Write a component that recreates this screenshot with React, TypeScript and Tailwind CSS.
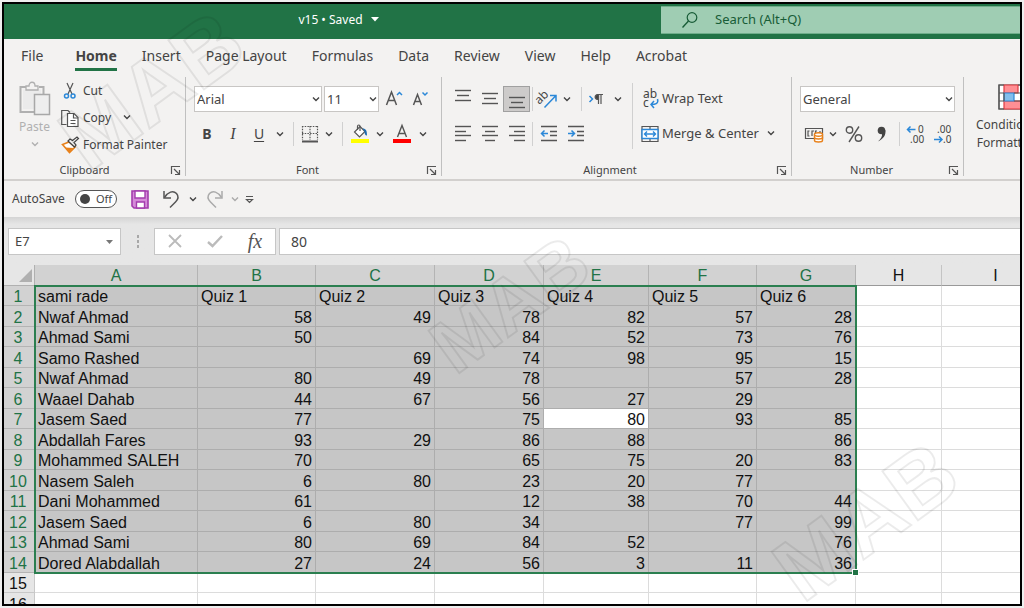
import React, { useState } from 'react'
import clsx from 'clsx'

const columns = ['A', 'B', 'C', 'D', 'E', 'F', 'G', 'H', 'I']

const rows: string[][] = [
  ['sami rade', 'Quiz 1', 'Quiz 2', 'Quiz 3', 'Quiz 4', 'Quiz 5', 'Quiz 6'],
  ['Nwaf Ahmad', '58', '49', '78', '82', '57', '28'],
  ['Ahmad Sami', '50', '', '84', '52', '73', '76'],
  ['Samo Rashed', '', '69', '74', '98', '95', '15'],
  ['Nwaf Ahmad', '80', '49', '78', '', '57', '28'],
  ['Waael Dahab', '44', '67', '56', '27', '29', ''],
  ['Jasem Saed', '77', '', '75', '80', '93', '85'],
  ['Abdallah Fares', '93', '29', '86', '88', '', '86'],
  ['Mohammed SALEH', '70', '', '65', '75', '20', '83'],
  ['Nasem Saleh', '6', '80', '23', '20', '77', ''],
  ['Dani Mohammed', '61', '', '12', '38', '70', '44'],
  ['Jasem Saed', '6', '80', '34', '', '77', '99'],
  ['Ahmad Sami', '80', '69', '84', '52', '', '76'],
  ['Dored Alabdallah', '27', '24', '56', '3', '11', '36'],
  [],
  [],
]

const tabs = ['Home', 'Insert', 'Page Layout', 'Formulas', 'Data', 'Review', 'View', 'Help', 'Acrobat']

interface IconProps {
  w?: number
  h?: number
  className?: string
  children: React.ReactNode
}

function Icon({ w = 18, h = 18, className, children }: IconProps) {
  return (
    <svg
      width={w}
      height={h}
      viewBox={`0 0 ${w} ${h}`}
      fill="none"
      stroke="#555"
      strokeWidth="1.2"
      className={clsx('shrink-0 overflow-visible', className)}
      aria-hidden="true"
    >
      {children}
    </svg>
  )
}

function Chevron({ className }: { className?: string }) {
  return (
    <Icon w={8} h={6} className={className}>
      <path d="M1 1.5l3 3 3-3" strokeWidth="1.4" stroke="currentColor" />
    </Icon>
  )
}

function DropButton({ label, className = 'w-4' }: { label: string; className?: string }) {
  return (
    <button aria-label={label} className={clsx('flex h-6 items-center justify-center', className)}>
      <Chevron />
    </button>
  )
}

interface ToolProps {
  label: string
  className?: string
  children: React.ReactNode
}

function Tool({ label, className = 'w-[27px]', children }: ToolProps) {
  return (
    <button aria-label={label} className={clsx('flex h-[26px] items-center justify-center', className)}>
      {children}
    </button>
  )
}

function Divider({ className }: { className?: string }) {
  return <div className={clsx('h-6 w-px bg-[#d0d0d0]', className)} />
}

interface PickerProps {
  label: string
  value: string
  className?: string
}

function Picker({ label, value, className }: PickerProps) {
  return (
    <div className={clsx('relative h-[26px]', className)}>
      <select
        aria-label={label}
        className="h-full w-full appearance-none border border-[#c8c6c4] bg-white pl-0.5 text-[13px] leading-6 text-[#444]"
      >
        <option>{value}</option>
      </select>
      <Chevron className="pointer-events-none absolute top-2.5 right-0.5" />
    </div>
  )
}

interface GroupProps {
  title: string
  className?: string
  children: React.ReactNode
}

function Group({ title, className, children }: GroupProps) {
  return (
    <section className={clsx('flex shrink-0 flex-col border-r border-[#c0c0c0]', className)}>
      <div className="flex-1">{children}</div>
      <div className="flex h-3 items-center">
        <h2 className="flex-1 text-center text-[11px] leading-3">{title}</h2>
        <button aria-label={`${title} settings`} className="flex w-5 justify-center">
          <Icon w={11} h={11}>
            <path d="M1.5 9V1.5H10M4 4l5 5M9.5 5v4.5H5" />
          </Icon>
        </button>
      </div>
    </section>
  )
}

function LinesIcon({ lines }: { lines: number[][] }) {
  return (
    <Icon>
      {lines.map(([x1, x2, y]) => (
        <path key={y} d={`M${x1} ${y}.5H${x2}`} strokeWidth="1.4" />
      ))}
    </Icon>
  )
}

function ClipboardGroup() {
  return (
    <Group title="Clipboard" className="w-[182px]">
      <div className="flex">
        <button className="flex w-[57px] flex-col items-center pl-1 text-[#b0b0b0]">
          <Icon w={32} h={36} className="mt-1">
            <path d="M7 6H1.5v25H16M20 6h4.500v7" stroke="#b0b0b0" strokeWidth="2" />
            <path d="M4 8.500h18v4.500h-7v15H4z" fill="#ebebeb" stroke="none" />
            <path d="M7 9V5h3c0-5 6-5 6 0h3v4z" fill="#f3f2f1" stroke="#b0b0b0" strokeWidth="1.3" />
            <path d="M15.500 13.500h15v20h-15z" fill="#eee" stroke="#a8a8a8" strokeWidth="1.500" />
          </Icon>
          <span className="text-xs leading-5">Paste</span>
          <Chevron className="mt-1" />
        </button>
        <div className="flex flex-col gap-px pt-px text-xs">
          <button className="flex h-[26px] items-center gap-1">
            <Icon>
              <path d="M6 1l5 11M12 1L7 12" />
              <circle cx="5.5" cy="14" r="2" stroke="#2b88d8" strokeWidth="1.5" />
              <circle cx="12" cy="14" r="2" stroke="#2b88d8" strokeWidth="1.5" />
            </Icon>
            Cut
          </button>
          <div className="flex">
            <button className="flex h-[26px] items-center gap-1">
              <Icon>
                <path d="M5.500 15.500H.7V1.500H7l2 2" />
                <path d="M6.500 4.500H13l4 4v9H6.500z" fill="#fff" />
                <path d="M12.500 4.500v4.500H17M9.500 11.500h5M9.500 14.500h5" />
              </Icon>
              Copy
            </button>
            <DropButton label="Copy options" className="ml-2 w-4" />
          </div>
          <button className="flex h-[26px] items-center gap-1">
            <Icon>
              <path d="M1.500 8.500l7 8 5.500-5.500-6-5z" stroke="#e8811a" strokeWidth="1.6" fill="#fff" />
              <path d="M4 11.500l4.500 4.500 4-4z" fill="#e8811a" stroke="none" />
              <path d="M7 5l6.500 6 1.500-2-2-2.500L17.500 2.500 16 1l-4.500 3.500L9 3z" fill="#f3f2f1" stroke="#444" />
            </Icon>
            Format Painter
          </button>
        </div>
      </div>
    </Group>
  )
}

function FontGroup() {
  return (
    <Group title="Font" className="w-64 pl-2">
      <div className="flex h-11 items-center">
        <Picker label="Font" value="Arial" className="w-32" />
        <Picker label="Font size" value="11" className="ml-0.5 w-[55px]" />
        <Tool label="Increase font size" className="ml-0.5 w-[26px]">
          <Icon>
            <path d="M1.500 15L6.500 2 11.500 15M3.500 10.500h6.500" strokeWidth="1.500" />
            <path d="M12 5l2.500-2.500L17 5" stroke="#2b88d8" strokeWidth="1.500" />
          </Icon>
        </Tool>
        <Tool label="Decrease font size" className="w-[26px]">
          <Icon>
            <path d="M2.500 15l4-10.500 4 10.500M4 11.500h5.500" strokeWidth="1.500" />
            <path d="M11.500 2.500L14 5l2.500-2.500" stroke="#2b88d8" strokeWidth="1.500" />
          </Icon>
        </Tool>
      </div>
      <div className="flex h-[26px] items-center">
        <Tool label="Bold" className="w-[26px] text-sm font-bold">B</Tool>
        <Tool label="Italic" className="w-[26px] font-['Liberation_Serif'] text-base italic">I</Tool>
        <Tool label="Underline" className="w-[26px] text-sm underline underline-offset-2">U</Tool>
        <DropButton label="Underline options" />
        <Divider className="mx-[5px]" />
        <Tool label="Borders" className="w-[22px]">
          <Icon>
            <path d="M1.500 1v14M9 1v14M16.500 1v14M1 1.500h16M1 8.500h16" strokeDasharray="1.500 1.200" />
            <path d="M1 16.500h16" strokeWidth="2" />
          </Icon>
        </Tool>
        <DropButton label="Border options" />
        <Divider className="mx-[5px]" />
        <Tool label="Fill color" className="w-6">
          <Icon h={20}>
            <path d="M0 15h18v4H0z" fill="#ff0" stroke="none" />
            <path d="M9 2.500l5 5-5.500 5.500L3.500 8z" fill="#fff" />
            <path d="M9 7V2.500C9 .5 6.500.5 6.500 2.500V6" />
            <path d="M11.500 4.500c3.500 0 4.500 2 4.500 7-2 0-2.500-2-2.500-4z" fill="#1e6cb0" stroke="none" />
          </Icon>
        </Tool>
        <DropButton label="Fill color options" />
        <Tool label="Font color">
          <Icon h={20}>
            <path d="M4.500 13L9 1.500 13.500 13M6 9.500h6" strokeWidth="1.400" />
            <path d="M0 15h18v4H0z" fill="#f00" stroke="none" />
          </Icon>
        </Tool>
        <DropButton label="Font color options" />
      </div>
    </Group>
  )
}

function AlignmentGroup() {
  return (
    <Group title="Alignment" className="w-[350px] pl-[7px]">
      <div className="flex">
        <div className="w-[183px]">
          <div className="flex h-11 items-center">
            <Tool label="Top align">
              <LinesIcon lines={[[1, 17, 0], [3, 15, 5], [1, 17, 10]]} />
            </Tool>
            <Tool label="Middle align">
              <LinesIcon lines={[[1, 17, 3], [3, 15, 8], [1, 17, 13]]} />
            </Tool>
            <Tool label="Bottom align" className="w-[27px] border border-[#a0a0a0] bg-[#cdcbca]">
              <LinesIcon lines={[[1, 17, 7], [3, 15, 12], [1, 17, 17]]} />
            </Tool>
            <Divider className="mx-0.5" />
            <Tool label="Orientation" className="w-6">
              <Icon w={20}>
                <text x="-2" y="11" transform="rotate(-45 5 8)" fontSize="12" fill="#444" stroke="none">ab</text>
                <path d="M7.500 17.500L18.500 6M13 5.500h6v6" stroke="#2b88d8" strokeWidth="1.500" />
              </Icon>
            </Tool>
            <DropButton label="Orientation options" />
            <Divider className="ml-1.5" />
            <Tool label="Text direction" className="w-7">
              <Icon w={16}>
                <path d="M1.500 6l3 3-3 3" stroke="#2b88d8" strokeWidth="1.500" />
                <path d="M10.500 14V4.500M13 14V4.500M8.500 4.500H15" />
                <path d="M10.500 4.500v5C6 9.500 6 4.500 10.500 4.500z" fill="#444" />
              </Icon>
            </Tool>
            <DropButton label="Text direction options" />
          </div>
          <div className="flex h-[26px] items-center">
            <Tool label="Align left">
              <LinesIcon lines={[[1, 17, 1], [1, 12, 6], [1, 17, 10], [1, 12, 15]]} />
            </Tool>
            <Tool label="Center">
              <LinesIcon lines={[[1, 17, 1], [4, 14, 6], [1, 17, 10], [4, 14, 15]]} />
            </Tool>
            <Tool label="Align right">
              <LinesIcon lines={[[1, 17, 1], [6, 17, 6], [1, 17, 10], [6, 17, 15]]} />
            </Tool>
            <Divider className="mx-0.5" />
            <Tool label="Decrease indent">
              <Icon>
                <path d="M1 1.500h16M10 6.500h7M10 10.500h7M1 15.500h16" strokeWidth="1.400" />
                <path d="M8 8.500H1.500M4.500 5.500l-3 3 3 3" stroke="#2b88d8" strokeWidth="1.500" />
              </Icon>
            </Tool>
            <Tool label="Increase indent">
              <Icon>
                <path d="M1 1.500h16M10 6.500h7M10 10.500h7M1 15.500h16" strokeWidth="1.400" />
                <path d="M1 8.500h6.500M4.500 5.500l3 3-3 3" stroke="#2b88d8" strokeWidth="1.500" />
              </Icon>
            </Tool>
          </div>
        </div>
        <div className="mt-1.5 h-[66px] w-px bg-[#d0d0d0]" />
        <div className="pl-2 text-[13px]">
          <button className="flex h-11 items-center gap-[3px]">
            <Icon h={20}>
              <text x="2" y="9" fontSize="12" fill="#444" stroke="none">ab</text>
              <text x="2" y="18" fontSize="12" fill="#444" stroke="none">c</text>
              <path d="M16.500 10c1.500 5-3 5.500-6 5.500M13 12l-3 3.500 3 3.500" stroke="#2b88d8" strokeWidth="1.500" />
            </Icon>
            Wrap Text
          </button>
          <div className="flex">
            <button className="flex h-[26px] items-center gap-[3px]">
              <Icon>
                <path d="M1 1.500h16v15H1zM9 1.500v15" stroke="#555" />
                <path d="M1 4.500h16v9H1z" fill="#fff" stroke="#2b88d8" strokeWidth="1.400" />
                <path d="M3.500 9h11M6 6.500L3.500 9 6 11.500M12 6.500L14.500 9 12 11.500" stroke="#2b88d8" strokeWidth="1.400" />
              </Icon>
              Merge &amp; Center
            </button>
            <DropButton label="Merge options" className="ml-1 w-4" />
          </div>
        </div>
      </div>
    </Group>
  )
}

function NumberGroup() {
  return (
    <Group title="Number" className="w-[172px] pl-2">
      <div className="flex h-11 items-center">
        <Picker label="Number format" value="General" className="w-[155px]" />
      </div>
      <div className="flex h-[26px] items-center">
        <Tool label="Accounting format">
          <Icon w={20}>
            <path d="M1.500 3.500h17v10h-17z" />
            <path d="M5.500 6H4v5h1.500M10 6H8v5M13 6h-1.500v3M16 6v2" />
            <path d="M10.500 9.500v6c0 2 8 2 8 0v-6" fill="#fff" stroke="#e8811a" strokeWidth="1.400" />
            <path d="M10.500 12.500c0 2 8 2 8 0" stroke="#e8811a" strokeWidth="1.400" />
            <ellipse cx="14.500" cy="9.500" rx="4" ry="1.700" fill="#fff" stroke="#e8811a" strokeWidth="1.400" />
          </Icon>
        </Tool>
        <DropButton label="Accounting options" className="w-3" />
        <Tool label="Percent style" className="w-[30px]">
          <Icon>
            <circle cx="4.500" cy="5" r="3.200" strokeWidth="1.400" />
            <circle cx="13.500" cy="13" r="3.200" strokeWidth="1.400" />
            <path d="M14 1.500L4 17" strokeWidth="1.400" />
          </Icon>
        </Tool>
        <Tool label="Comma style" className="w-6">
          <Icon w={12}>
            <circle cx="6.500" cy="5.500" r="3.800" fill="#444" stroke="none" />
            <path d="M10.300 5c1 5-2 9-7.300 11.500 3-3 4.500-5 4-8z" fill="#444" stroke="none" />
          </Icon>
        </Tool>
        <Divider className="ml-1.5" />
        <Tool label="Increase decimal" className="ml-0.5 w-[27px]">
          <Icon w={20} h={20}>
            <path d="M9.500 5.500h-8M4.500 2.500l-3 3 3 3" stroke="#2b88d8" strokeWidth="1.500" />
            <text x="12" y="9" fontSize="10" fill="#444" stroke="none">0</text>
            <text x="4" y="19" fontSize="10" fill="#444" stroke="none">.00</text>
          </Icon>
        </Tool>
        <Tool label="Decrease decimal">
          <Icon w={20} h={20}>
            <text x="4" y="9" fontSize="10" fill="#444" stroke="none">.00</text>
            <path d="M1 15.500h8M6 12.500l3 3-3 3" stroke="#2b88d8" strokeWidth="1.500" />
            <text x="10" y="19" fontSize="10" fill="#444" stroke="none">.0</text>
          </Icon>
        </Tool>
      </div>
    </Group>
  )
}

function StylesGroup() {
  return (
    <section className="shrink-0 pt-[7px] pl-3">
      <button className="flex flex-col items-center text-xs leading-[18px]">
        <Icon w={28} h={26} className="mb-1.5 ml-2">
          <path d="M1 1h26v24H1z" fill="#fff" />
          <path d="M6 1h14v8H6zM6 17h19v8H6z" fill="#ff8f94" stroke="#e03b41" />
          <path d="M6 9h10v8H6z" fill="#83beec" stroke="#2b88d8" />
          <path d="M6 1H1v24h5M1 9h5M1 17h5M20 1h7v24M16 9h11M16 17h11M6 9v8" />
        </Icon>
        <span>Conditional</span>
        <span>Formatting</span>
      </button>
    </section>
  )
}

function QuickAccess() {
  const [autoSave, setAutoSave] = useState(false)

  return (
    <div className="flex h-9 shrink-0 items-center pl-2">
      <label className="flex items-center gap-2.5 text-xs">
        AutoSave
        <input
          type="checkbox"
          checked={autoSave}
          onChange={e => setAutoSave(e.target.checked)}
          className="sr-only"
        />
        <span className="flex h-[18px] w-[42px] items-center gap-1.5 rounded-full border border-[#555] bg-white pl-1 text-[11px]">
          <span className="h-2.5 w-2.5 shrink-0 rounded-full bg-[#444]" />
          {autoSave ? 'On' : 'Off'}
        </span>
      </label>
      <Tool label="Save" className="ml-2.5 w-[26px]">
        <Icon h={19}>
          <path d="M1 1h16v17H3l-2-2z" fill="#d58bd9" stroke="#a33cad" strokeWidth="1.600" />
          <path d="M4 1h10v7H4z" fill="#fff" stroke="#a33cad" strokeWidth="1.400" />
          <path d="M5.500 18v-6h8v6z" fill="#fff" stroke="#a33cad" strokeWidth="1.400" />
        </Icon>
      </Tool>
      <Tool label="Undo" className="ml-1 w-7">
        <Icon h={20}>
          <path d="M2 2v7h7" strokeWidth="1.500" />
          <path d="M2.500 8.500C6 3 11 1 14.500 4.500c3 3.500 1 6.500-1 8.500L8 18.500" strokeWidth="1.500" />
        </Icon>
      </Tool>
      <DropButton label="Undo history" />
      <Tool label="Redo" className="w-7">
        <Icon h={20}>
          <path d="M16 2v7H9" strokeWidth="1.500" stroke="#aaa" />
          <path d="M15.500 8.500C12 3 7 1 3.500 4.500c-3 3.500-1 6.500 1 8.500L10 18.500" strokeWidth="1.500" stroke="#aaa" />
        </Icon>
      </Tool>
      <DropButton label="Redo history" className="w-3 text-[#aaa]" />
      <Tool label="Customize toolbar" className="ml-1">
        <Icon w={9} h={9}>
          <path d="M1 1.500h7M1.500 4.500l3 3 3-3z" />
        </Icon>
      </Tool>
    </div>
  )
}

function FormulaBar() {
  return (
    <div className="flex h-12 shrink-0 items-center bg-linear-to-b from-[#d4d4d4] via-[#e6e6e6] via-15% to-[#e6e6e6] pl-1">
      <div className="relative h-[27px] w-[113px]">
        <input
          aria-label="Name box"
          defaultValue="E7"
          className="h-full w-full border border-[#c6c6c6] bg-white pl-1.5 text-[13px]"
        />
        <Icon w={7} h={4} className="absolute top-3 right-2">
          <path d="M0 0h7L3.500 4z" fill="#777" stroke="none" />
        </Icon>
      </div>
      <div className="flex w-[33px] flex-col items-center gap-0.5">
        <span className="h-[3px] w-0.5 bg-[#a8a8a8]" />
        <span className="h-[3px] w-0.5 bg-[#a8a8a8]" />
        <span className="h-[3px] w-0.5 bg-[#a8a8a8]" />
      </div>
      <div className="flex h-[27px] w-[122px] items-center justify-around border border-[#c6c6c6] bg-white">
        <Tool label="Cancel">
          <Icon w={14} h={12}>
            <path d="M1 0l12 12M13 0L1 12" stroke="#bbb" strokeWidth="1.800" />
          </Icon>
        </Tool>
        <Tool label="Enter">
          <Icon w={16} h={14}>
            <path d="M1 8l4.500 4L15 2" stroke="#bbb" strokeWidth="2.400" />
          </Icon>
        </Tool>
        <Tool label="Insert function" className="w-[27px] font-['Liberation_Serif'] text-xl italic text-[#555]">
          fx
        </Tool>
      </div>
      <input
        aria-label="Formula"
        defaultValue="80"
        className="ml-[3px] h-[27px] min-w-0 flex-1 border border-r-0 border-[#c6c6c6] bg-white pl-[11px] text-sm"
      />
    </div>
  )
}

function Sheet() {
  return (
    <div className="min-h-0 flex-1 overflow-hidden bg-white font-['Liberation_Sans',sans-serif] text-base leading-[21px] text-[#111]">
      <div className="relative">
        <table className="w-max table-fixed border-separate border-spacing-0">
          <colgroup>
            <col className="w-[31px]" />
            <col className="w-[163px]" />
            <col className="w-[118px]" />
            <col className="w-[119px]" />
            <col className="w-[109px]" />
            <col className="w-[105px]" />
            <col className="w-[108px]" />
            <col className="w-[99px]" />
            <col className="w-[86px]" />
            <col className="w-[108px]" />
          </colgroup>
          <thead>
            <tr className="h-[21px]">
              <th className="border-r border-b border-[#b0b0b0] bg-[#e6e6e6] p-0 pr-0.5">
                <Icon w={13} h={13} className="ml-auto">
                  <path d="M13 0v13H0z" fill="#b0b0b0" stroke="none" />
                </Icon>
              </th>
              {columns.map((name, i) => (
                <th
                  key={name}
                  className={clsx(
                    'border-r border-b border-b-[#999] p-0 font-normal',
                    i < 7 ? 'border-r-[#b4b4b4] bg-[#d2d2d2] text-[#217346]' : 'border-r-[#c4c4c4] bg-[#e6e6e6]'
                  )}
                >
                  <div className="h-5">{name}</div>
                </th>
              ))}
            </tr>
          </thead>
          <tbody>
            {rows.map((cells, r) => (
              <tr key={r} className="h-5 even:h-[21px]">
                <th
                  className={clsx(
                    'border-r border-b p-0 pr-0.5 font-normal',
                    r < 14 ? 'border-[#b4b4b4] bg-[#d2d2d2] text-[#217346]' : 'border-[#c8c8c8] bg-[#e6e6e6]'
                  )}
                >
                  <div className="h-[19px]">{r + 1}</div>
                </th>
                {columns.map((name, c) => {
                  const selected = r < 14 && c < 7
                  const active = r === 6 && c === 4
                  return (
                    <td
                      key={name}
                      className={clsx(
                        'border-r border-b px-[3px] py-0 whitespace-nowrap',
                        selected ? 'border-[#adadad]' : 'border-[#dcdcdc]',
                        selected && (active ? 'bg-white' : 'bg-[#c6c6c6]'),
                        r > 0 && c > 0 && 'text-right'
                      )}
                    >
                      <div className="h-[19px]">{cells[c]}</div>
                    </td>
                  )
                })}
              </tr>
            ))}
          </tbody>
        </table>
        {/* Selection A1:G14 */}
        <div className="pointer-events-none absolute top-5 left-[30px] h-[289px] w-[823px] border-2 border-[#2b7f50]">
          <span className="absolute -right-[3px] -bottom-[3px] h-[5px] w-[5px] bg-[#217346] outline outline-white" />
        </div>
      </div>
    </div>
  )
}

function Watermark({ className }: { className: string }) {
  return (
    <span
      aria-hidden="true"
      className={clsx(
        "pointer-events-none absolute -translate-x-1/2 -translate-y-1/2 -rotate-36 font-['Liberation_Sans',sans-serif] leading-none font-bold text-transparent select-none [-webkit-text-stroke:2px_rgba(0,0,0,0.08)]",
        className
      )}
    >
      MAB
    </span>
  )
}

export default function App() {
  return (
    <div className="h-screen bg-[#eee] p-0.5 font-['Noto_Sans',sans-serif] text-[#444]">
      <main className="relative flex h-full flex-col overflow-hidden border-2 border-black bg-[#f3f2f1]">
        <header className="flex h-[35px] shrink-0 items-center bg-[#217346] text-white">
          <div className="flex w-[657px] items-center justify-center gap-2 pb-1 pl-3 text-xs">
            <h1>v15 • Saved</h1>
            <Icon w={8} h={5}>
              <path d="M0 0h8L4 4.500z" fill="#fff" stroke="none" />
            </Icon>
          </div>
          <div className="mb-1 flex h-7 flex-1 items-center gap-4 border-y border-[#6fae8b] bg-[#9fcdb3] pl-5">
            <Icon>
              <circle cx="11" cy="6.500" r="4.800" stroke="#185c37" />
              <path d="M7.500 10L1.500 16.500" stroke="#185c37" strokeWidth="1.400" />
            </Icon>
            <input
              type="search"
              aria-label="Search"
              placeholder="Search (Alt+Q)"
              className="min-w-0 flex-1 bg-transparent text-[13px] text-[#185c37] placeholder:text-[#185c37]"
            />
          </div>
        </header>

        <nav className="flex h-[38px] shrink-0 items-start pl-[17px] text-sm leading-5">
          <a href="#file" className="mt-[7px] mr-8">File</a>
          <div className="flex gap-[25px]">
            {tabs.map(tab => (
              <a
                key={tab}
                href={`#${tab}`}
                className={clsx('mt-[7px] whitespace-nowrap', tab === 'Home' && 'border-b-3 border-[#217346] pb-0.5 font-bold')}
              >
                {tab}
              </a>
            ))}
          </div>
        </nav>

        <div className="flex h-[104px] shrink-0 border-b-2 border-[#d2d0ce] pb-[3px]">
          <ClipboardGroup />
          <FontGroup />
          <AlignmentGroup />
          <NumberGroup />
          <StylesGroup />
        </div>

        <QuickAccess />
        <FormulaBar />
        <Sheet />

        <Watermark className="top-[86px] left-[148px] text-[88px]" />
        <Watermark className="top-[300px] left-[506px] text-[76px]" />
        <Watermark className="top-[517px] left-[862px] text-[88px]" />
      </main>
    </div>
  )
}
